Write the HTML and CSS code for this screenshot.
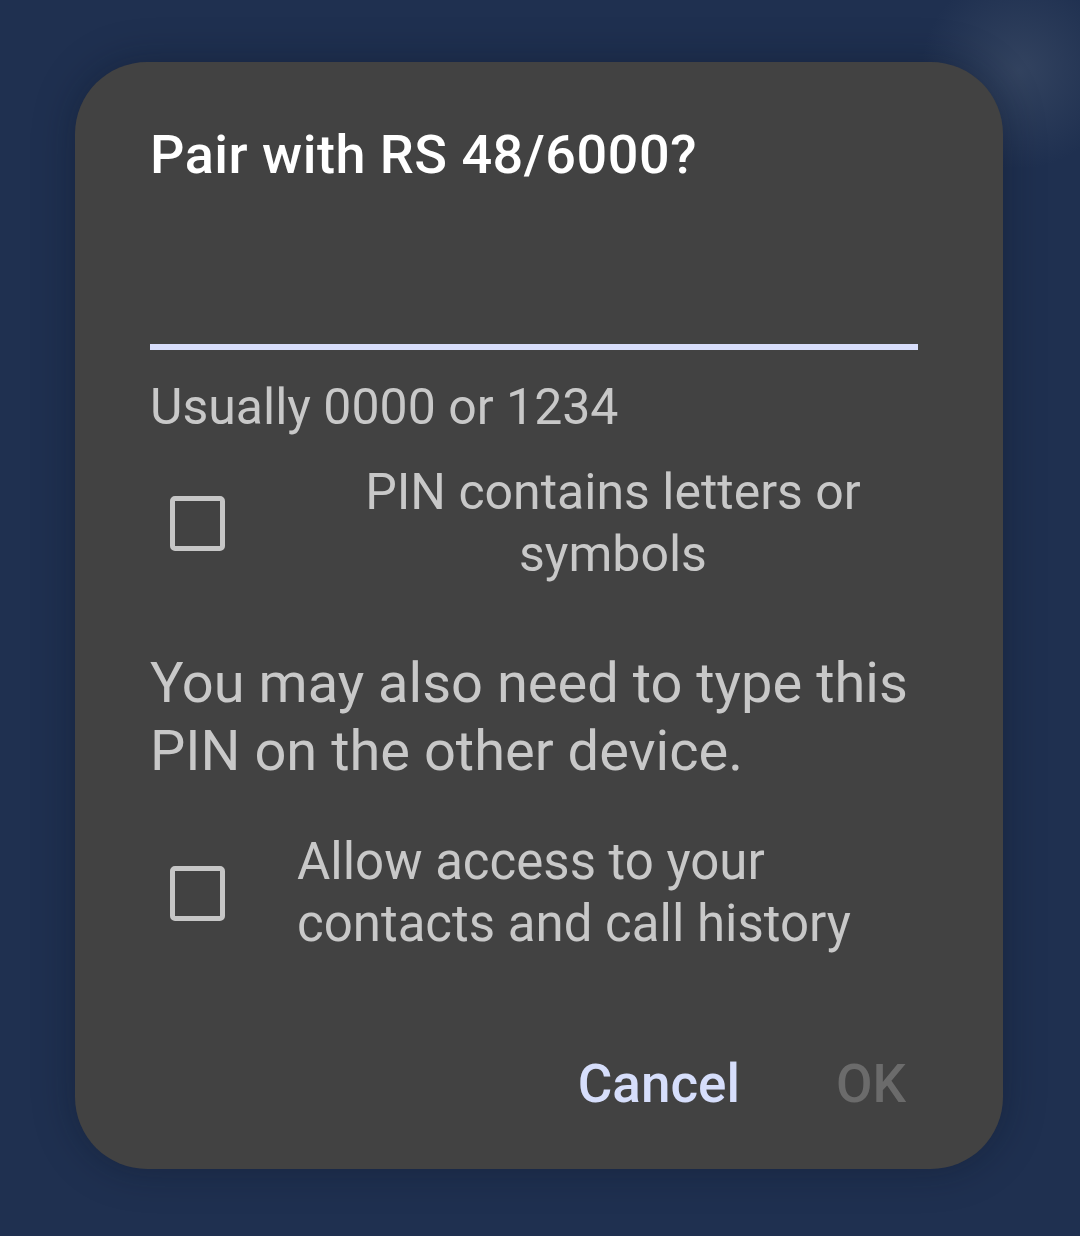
FILE: index.html
```html
<!DOCTYPE html>
<html>
<head>
    <title>Pair with RS 48/6000?</title>
    <link rel="stylesheet" href="styles.css">
</head>
<body>
    <div class="glow"></div>
    <div class="dialog">
        <h1 class="title">Pair with RS 48/6000?</h1>
        <div class="pin-field"></div>
        <div class="hint">Usually 0000 or 1234</div>
        <label class="check-row">
            <span class="box"></span>
            <span class="check-text centered">PIN contains letters or symbols</span>
        </label>
        <p class="note">You may also need to type this PIN on the other device.</p>
        <label class="check-row second">
            <span class="box"></span>
            <span class="check-text">Allow access to your contacts and call history</span>
        </label>
        <div class="actions">
            <button class="btn primary">Cancel</button>
            <button class="btn disabled">OK</button>
        </div>
    </div>
</body>
</html>
```

FILE: styles.css
```css
body {
    margin: 0;
    min-height: 1236px;
    background-color: #1f3050;
    font-family: Roboto, "Noto Sans", sans-serif;
    overflow: hidden;
    position: relative;
}

/* soft light blob behind the top right corner */
.glow {
    position: absolute;
    top: -30px;
    right: -40px;
    width: 200px;
    height: 200px;
    border-radius: 50%;
    background: radial-gradient(circle, rgba(80, 95, 118, 0.4), rgba(31, 48, 80, 0) 70%);
    pointer-events: none;
}

.dialog {
    position: relative;
    margin: 62px 0 0 75px;
    width: 928px;
    box-sizing: border-box;
    padding: 62px 85px 54px 75px;
    background-color: #424242;
    border-radius: 72px;
    box-shadow: 0 0 40px rgba(10, 18, 32, 0.35);
}

.title {
    margin: 0;
    font-size: 54px;
    font-weight: 500;
    line-height: 62px;
    letter-spacing: 0.5px;
    color: #ffffff;
}

.pin-field {
    height: 158px;
    border-bottom: 6px solid #d8defb;
}

.hint {
    margin-top: 27px;
    font-size: 50px;
    line-height: 60px;
    color: #c8c8c8;
}

.check-row {
    display: flex;
    align-items: center;
    margin-top: 24px;
}

.box {
    flex: none;
    width: 55px;
    height: 55px;
    box-sizing: border-box;
    margin-left: 20px;
    margin-right: 72px;
    border: 5px solid #c6c6c6;
    border-radius: 5px;
}

.check-text {
    flex: 1;
    font-size: 50px;
    line-height: 62px;
    color: #c8c8c8;
}

.check-text.centered {
    text-align: center;
    margin-right: -11px;
}

.note {
    margin: 64px 0 0;
    font-size: 56px;
    line-height: 68px;
    color: #c8c8c8;
}

.check-row.second {
    margin-top: 46px;
}

.check-row.second .check-text {
    font-size: 51px;
}

.actions {
    display: flex;
    justify-content: flex-end;
    gap: 72px;
    margin-top: 98px;
}

.btn {
    padding: 0 12px;
    border: none;
    background: none;
    font-family: Roboto, "Noto Sans", sans-serif;
    font-size: 53px;
    font-weight: 500;
    line-height: 62px;
    cursor: pointer;
}

.btn.primary {
    color: #d6defb;
}

.btn.disabled {
    color: #6b6b6b;
}
```
